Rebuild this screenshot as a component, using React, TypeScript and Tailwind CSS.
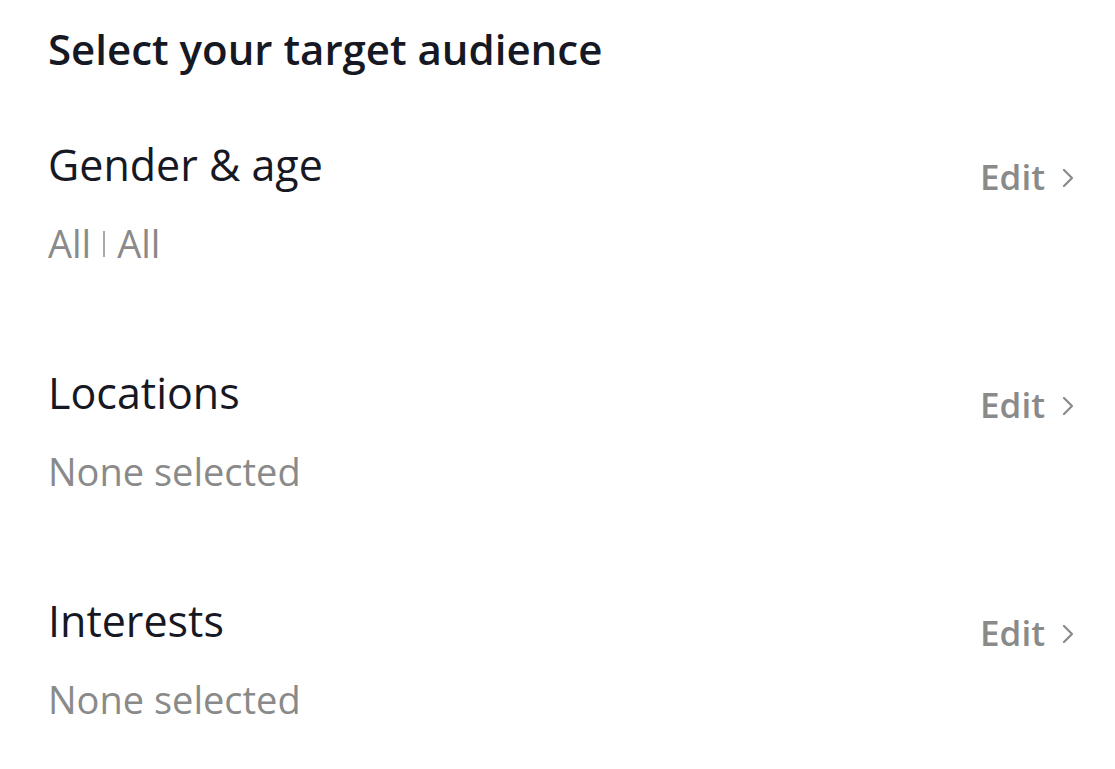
import React from 'react';

const rows = [
  { title: 'Gender & age', value: ['All', 'All'] },
  { title: 'Locations', value: ['None selected'] },
  { title: 'Interests', value: ['None selected'] },
];

function Chevron() {
  return (
    <svg width="13" height="20" viewBox="0 0 13 20" fill="none" className="ml-[17px] mt-[2px]">
      <path d="M2 2l8 8-8 8" stroke="#8a8a8a" strokeWidth="2.2" strokeLinecap="round" strokeLinejoin="round" />
    </svg>
  );
}

export default function App() {
  return (
    <div
      className="w-[1115px] h-[769px] bg-white pl-[48px] pr-[40px] pt-[24px] overflow-hidden"
      style={{ fontFamily: '"Open Sans", Lato, sans-serif' }}
    >
      <h1 className="text-[42px] leading-[50px] font-semibold text-[#161823]">Select your target audience</h1>

      <div className="mt-[65px] flex flex-col gap-[102px]">
        {rows.map((r) => (
          <div key={r.title} className="flex items-start justify-between">
            <div className="flex flex-col">
              <span className="text-[43px] leading-[52px] text-[#161823]">{r.title}</span>
              <span className="mt-[30px] flex items-center text-[38px] leading-[44px] text-[#8a8a8a]">
                {r.value.map((v, i) => (
                  <React.Fragment key={i}>
                    {i > 0 && <span className="mx-[12px] mt-[2px] w-[2px] h-[26px] shrink-0 bg-[#a8a8a8]" />}
                    {v}
                  </React.Fragment>
                ))}
              </span>
            </div>
            <button className="mt-[17px] flex items-center text-[35px] leading-[42px] font-semibold text-[#8a8a8a]">
              Edit
              <Chevron />
            </button>
          </div>
        ))}
      </div>
    </div>
  );
}
